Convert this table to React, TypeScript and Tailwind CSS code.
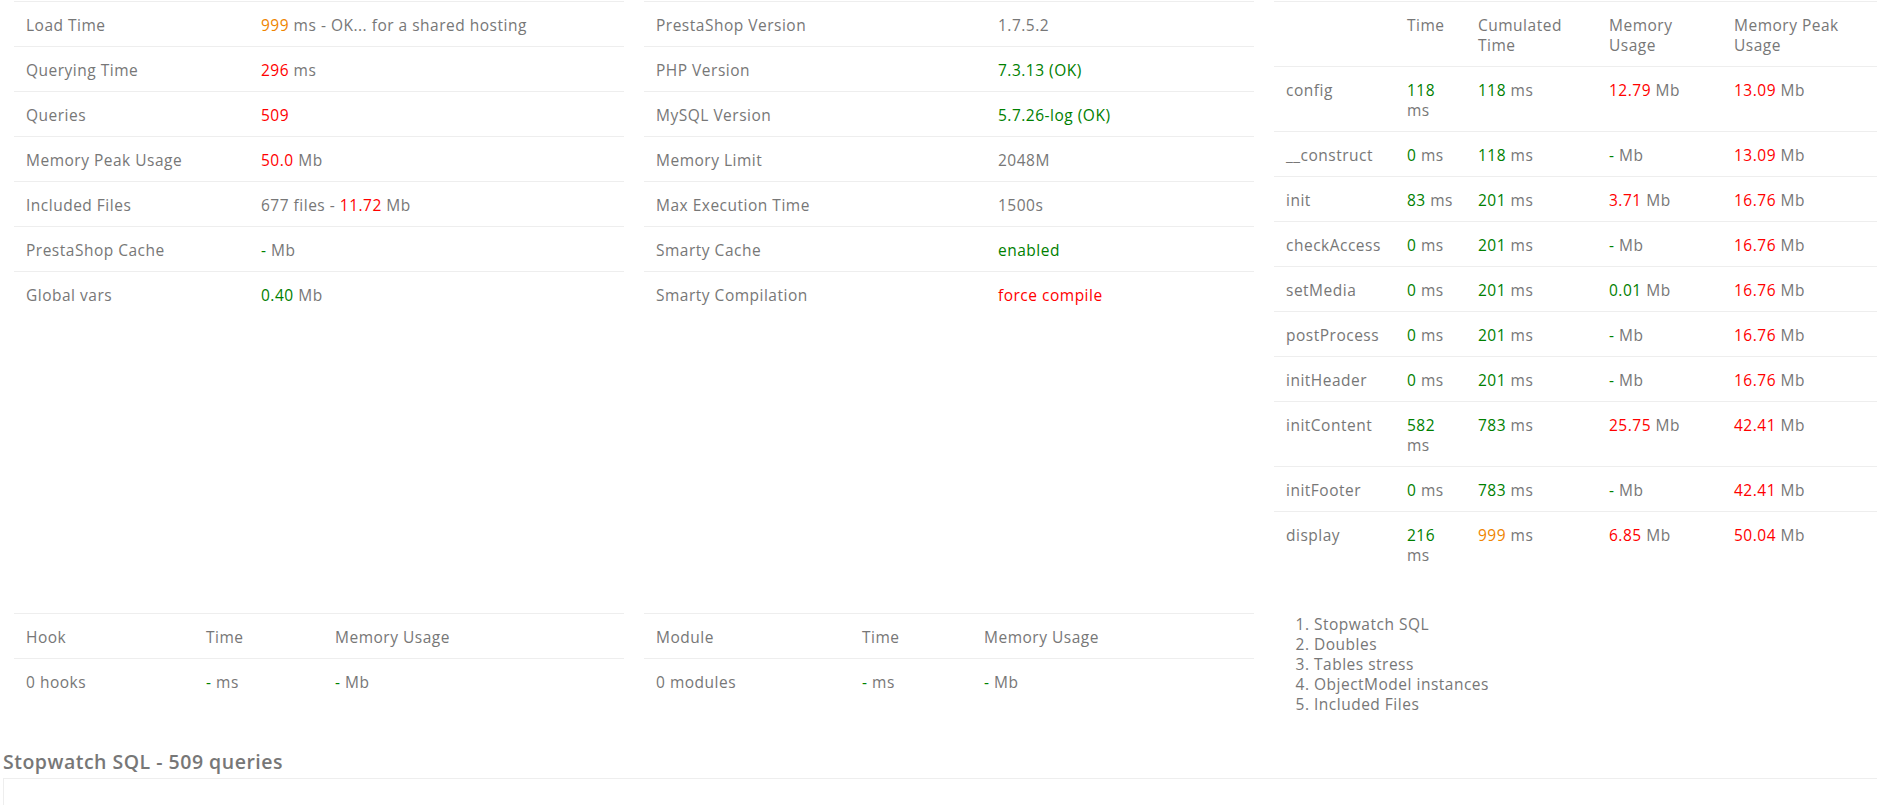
import React from 'react';

type Tone = 'ok' | 'warn' | 'bad';

const toneClass: Record<Tone, string> = {
  ok: 'text-[#008000]',
  warn: 'text-[#ef8400]',
  bad: 'text-[#ff0000]',
};

const V: React.FC<{ tone: Tone; children: React.ReactNode }> = ({ tone, children }) => (
  <span className={toneClass[tone]}>{children}</span>
);

const cell = 'px-[12px] pt-[13px] pb-[11px] align-top text-left font-normal';
const row = 'border-t border-[#eeeeee]';

const summary: [string, React.ReactNode][] = [
  ['Load Time', <><V tone="warn">999</V> ms - OK... for a shared hosting</>],
  ['Querying Time', <><V tone="bad">296</V> ms</>],
  ['Queries', <V tone="bad">509</V>],
  ['Memory Peak Usage', <><V tone="bad">50.0</V> Mb</>],
  ['Included Files', <>677 files - <V tone="bad">11.72</V> Mb</>],
  ['PrestaShop Cache', <><V tone="ok">-</V> Mb</>],
  ['Global vars', <><V tone="ok">0.40</V> Mb</>],
];

const config: [string, React.ReactNode][] = [
  ['PrestaShop Version', '1.7.5.2'],
  ['PHP Version', <V tone="ok">7.3.13 (OK)</V>],
  ['MySQL Version', <V tone="ok">5.7.26-log (OK)</V>],
  ['Memory Limit', '2048M'],
  ['Max Execution Time', '1500s'],
  ['Smarty Cache', <V tone="ok">enabled</V>],
  ['Smarty Compilation', <V tone="bad">force compile</V>],
];

// [step, time, cumulated, cumulatedTone, memory, memoryTone, peak]
const steps: [string, string, string, Tone, string, Tone, string][] = [
  ['config', '118', '118', 'ok', '12.79', 'bad', '13.09'],
  ['__construct', '0', '118', 'ok', '-', 'ok', '13.09'],
  ['init', '83', '201', 'ok', '3.71', 'bad', '16.76'],
  ['checkAccess', '0', '201', 'ok', '-', 'ok', '16.76'],
  ['setMedia', '0', '201', 'ok', '0.01', 'ok', '16.76'],
  ['postProcess', '0', '201', 'ok', '-', 'ok', '16.76'],
  ['initHeader', '0', '201', 'ok', '-', 'ok', '16.76'],
  ['initContent', '582', '783', 'ok', '25.75', 'bad', '42.41'],
  ['initFooter', '0', '783', 'ok', '-', 'ok', '42.41'],
  ['display', '216', '999', 'warn', '6.85', 'bad', '50.04'],
];

const KeyValueTable: React.FC<{ rows: [string, React.ReactNode][]; labelWidth: string }> = ({ rows, labelWidth }) => (
  <table className="w-full table-fixed border-collapse">
    <colgroup>
      <col className={labelWidth} />
      <col />
    </colgroup>
    <tbody>
      {rows.map(([label, value]) => (
        <tr key={label} className={row}>
          <td className={cell}>{label}</td>
          <td className={cell}>{value}</td>
        </tr>
      ))}
    </tbody>
  </table>
);

const EmptyTable: React.FC<{ head: string; empty: string; w1: string; w2: string }> = ({ head, empty, w1, w2 }) => (
  <table className="w-full table-fixed border-collapse">
    <colgroup>
      <col className={w1} />
      <col className={w2} />
      <col />
    </colgroup>
    <thead>
      <tr className={row}>
        <th className={cell}>{head}</th>
        <th className={cell}>Time</th>
        <th className={cell}>Memory Usage</th>
      </tr>
    </thead>
    <tbody>
      <tr className={row}>
        <td className={cell}>{empty}</td>
        <td className={cell}><V tone="ok">-</V> ms</td>
        <td className={cell}><V tone="ok">-</V> Mb</td>
      </tr>
    </tbody>
  </table>
);

const App: React.FC = () => {
  return (
    <div className="w-full min-h-screen overflow-hidden bg-white font-['Open_Sans','Lato',sans-serif] text-[15.5px] leading-[20px] tracking-[0.5px] text-[#777777]">
      <div className="w-[1894px] pl-[4px] pt-px">
        {/* Summary / configuration / run steps */}
        <div className="grid grid-cols-[630px_630px_630px]">
          <div className="px-[10px]">
            <KeyValueTable rows={summary} labelWidth="w-[235px]" />
          </div>
          <div className="px-[10px]">
            <KeyValueTable rows={config} labelWidth="w-[342px]" />
          </div>
          <div className="px-[10px]">
            <table className="w-full table-fixed border-collapse">
              <colgroup>
                <col className="w-[121px]" />
                <col className="w-[71px]" />
                <col className="w-[131px]" />
                <col className="w-[125px]" />
                <col />
              </colgroup>
              <thead>
                <tr className={row}>
                  <th className={cell}></th>
                  <th className={cell}>Time</th>
                  <th className={cell}>Cumulated Time</th>
                  <th className={cell}>Memory Usage</th>
                  <th className={cell}>Memory Peak Usage</th>
                </tr>
              </thead>
              <tbody>
                {steps.map(([name, time, cum, cumTone, mem, memTone, peak]) => (
                  <tr key={name} className={row}>
                    <td className={cell}>{name}</td>
                    <td className={cell}><V tone="ok">{time}</V> ms</td>
                    <td className={cell}><V tone={cumTone}>{cum}</V> ms</td>
                    <td className={cell}><V tone={memTone}>{mem}</V> Mb</td>
                    <td className={cell}><V tone="bad">{peak}</V> Mb</td>
                  </tr>
                ))}
              </tbody>
            </table>
          </div>
        </div>

        {/* Hooks / modules / links */}
        <div className="mt-[37px] grid grid-cols-[630px_630px_630px]">
          <div className="px-[10px]">
            <EmptyTable head="Hook" empty="0 hooks" w1="w-[180px]" w2="w-[129px]" />
          </div>
          <div className="px-[10px]">
            <EmptyTable head="Module" empty="0 modules" w1="w-[206px]" w2="w-[122px]" />
          </div>
          <div className="px-[10px]">
            <ol className="list-decimal pl-[40px] pt-px">
              <li>Stopwatch SQL</li>
              <li>Doubles</li>
              <li>Tables stress</li>
              <li>ObjectModel instances</li>
              <li>Included Files</li>
            </ol>
          </div>
        </div>
      </div>

      {/* Stopwatch SQL */}
      <div className="mt-[34px] pl-[3px]">
        <h2 className="text-[19.5px] leading-[28px] font-semibold text-[#777777]">Stopwatch SQL - 509 queries</h2>
        <div className="mt-[2px] h-[60px] border-l border-t border-[#eeeeee]" />
      </div>
    </div>
  );
};

export default App;
